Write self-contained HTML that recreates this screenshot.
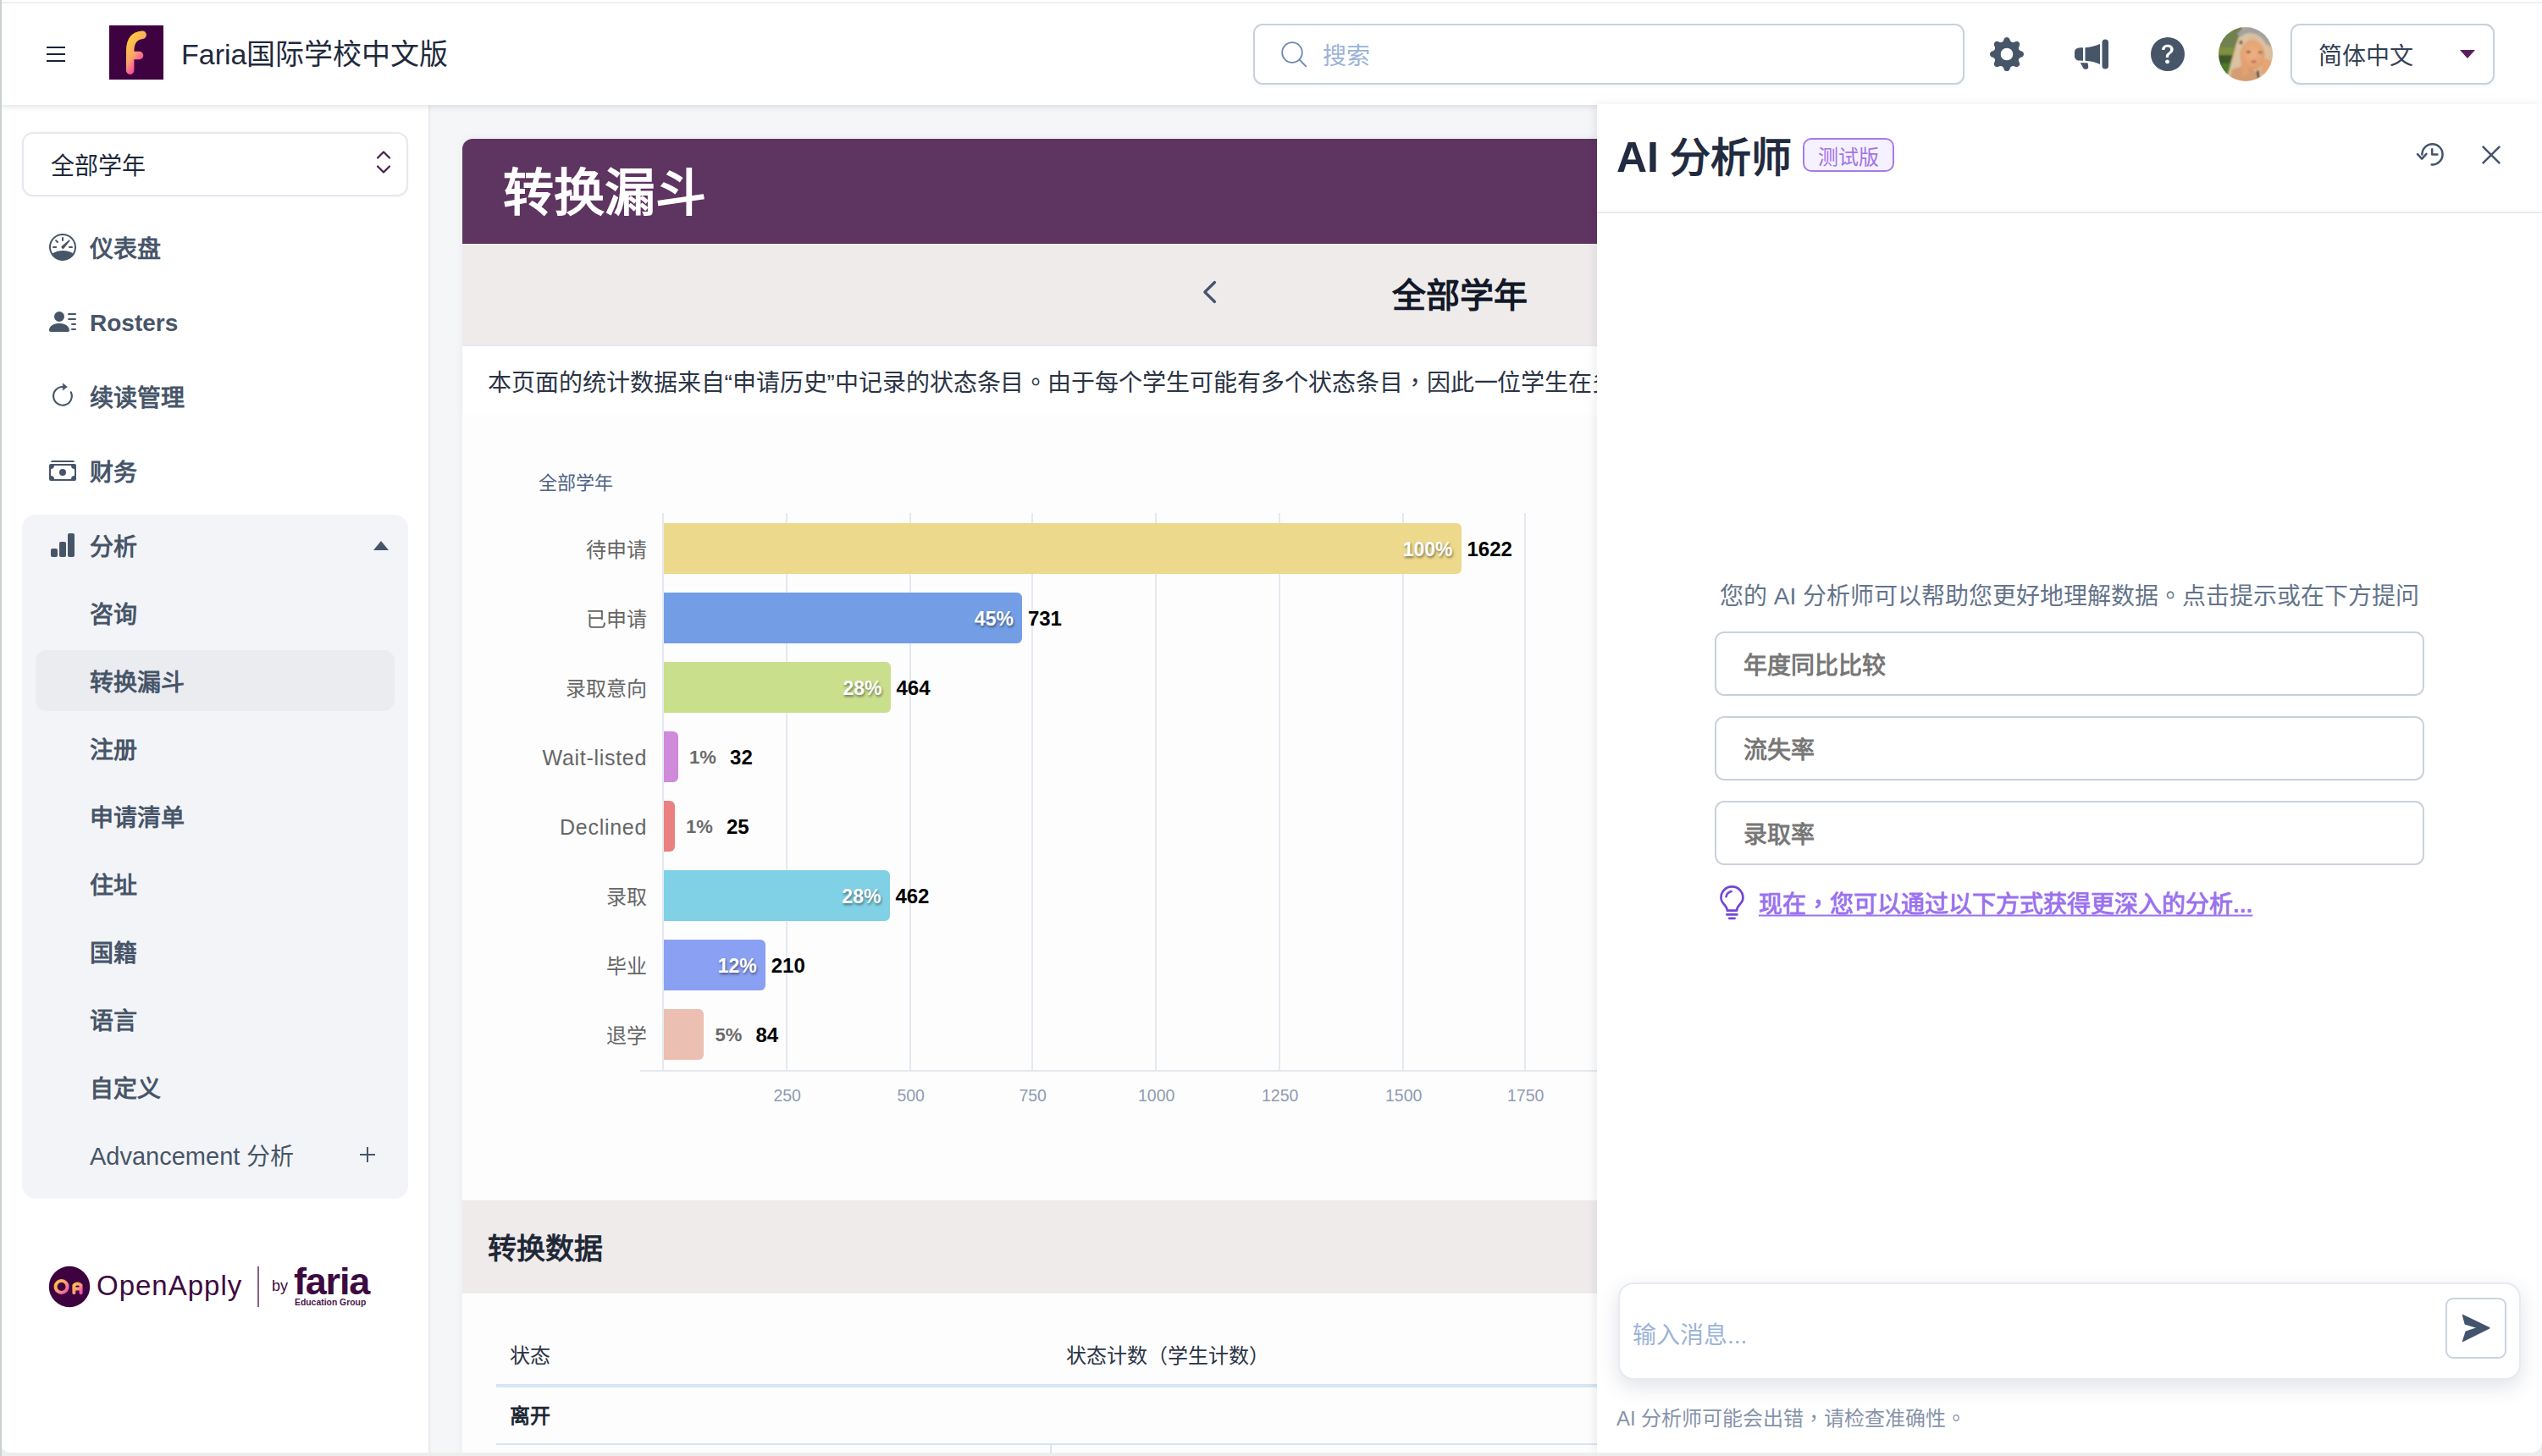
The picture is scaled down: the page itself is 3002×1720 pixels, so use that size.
<!DOCTYPE html>
<html lang="zh-CN">
<head>
<meta charset="utf-8">
<title>转换漏斗</title>
<style>
*{box-sizing:border-box;margin:0;padding:0}
html,body{width:3002px;height:1720px;overflow:hidden;background:#eceeec}
body{font-family:"Liberation Sans",sans-serif;color:#1e293b;position:relative}
.abs{position:absolute}
.t{position:absolute;white-space:nowrap;line-height:1;transform:translateY(-41%)}
.t.l{transform:translateY(-44%)}
#win{position:absolute;left:0;top:0;width:3002px;height:1716px;background:#f5f6f8;overflow:hidden;border-radius:0 0 13px 13px}
#edge{position:absolute;left:0;top:0;width:2px;height:1720px;background:#cbd2ce;z-index:50}
/* header */
#hdr{position:absolute;left:0;top:0;width:3002px;height:124px;background:#fff;box-shadow:0 2px 7px rgba(30,40,50,.13);z-index:5}
#topline{position:absolute;left:0;top:2px;width:3002px;height:2px;background:#f0f0f1}
/* sidebar */
#side{position:absolute;left:0;top:123px;width:506px;height:1600px;background:#fff;box-shadow:1px 0 3px rgba(30,40,70,.10);z-index:3}
.nav{font-size:28px;font-weight:700;color:#475569}
.cl{font-size:24px;color:#666}
.pin{font-size:23px;font-weight:700;color:#fff;text-shadow:1px 2px 3px rgba(0,0,0,.45)}
.pout{font-size:22px;font-weight:700;color:#6b6b6b}
.cnt{font-size:24px;font-weight:700;color:#000}
.t.tick{font-size:19.5px;color:#8f9bb3;transform:translate(-50%,-44%)}
/* card */
#card{position:absolute;left:546px;top:164px;width:1500px;height:1600px;background:#fff;border-radius:12px 0 0 0;overflow:hidden;z-index:1;box-shadow:0 0 10px rgba(30,40,60,.06)}
.pb{position:absolute;left:139px;width:838px;height:76px;border:2px solid #cad1dc;border-radius:11px;background:#fff}
.pbt{left:173px;font-size:28px;font-weight:700;color:#777}
/* AI panel */
#ai{position:absolute;left:1886px;top:123px;width:1116px;height:1593px;background:#fff;box-shadow:-3px 0 10px rgba(30,40,60,.08);z-index:6}
</style>
</head>
<body>
<div id="edge"></div>
<div id="win">

<!-- HEADER -->
<div id="hdr">
  <div id="topline"></div>
  <!-- hamburger -->
  <div class="abs" style="left:55px;top:55px;width:22px;height:2px;background:#1a2238"></div>
  <div class="abs" style="left:55px;top:63px;width:22px;height:2px;background:#1a2238"></div>
  <div class="abs" style="left:55px;top:71px;width:22px;height:2px;background:#1a2238"></div>
  <!-- logo -->
  <svg class="abs" style="left:129px;top:30px" width="64" height="64" viewBox="0 0 64 64">
    <defs><linearGradient id="lg" x1="0.2" y1="0.1" x2="0.6" y2="1"><stop offset="0" stop-color="#fdc443"/><stop offset="0.45" stop-color="#fba66a"/><stop offset="1" stop-color="#fb35ab"/></linearGradient></defs>
    <rect width="64" height="64" fill="#3f0240"/>
    <path d="M39.2 11.2 Q24.7 12.5 24.7 30 L24.7 53.3 M24.7 35.5 L35.6 35.5" fill="none" stroke="url(#lg)" stroke-width="9.4" stroke-linecap="round" stroke-linejoin="round"/>
  </svg>
  <div class="t" style="left:214px;top:64px;font-size:34px;color:#1f2a3d;transform:translateY(-49%)">Faria国际学校中文版</div>
  <!-- search -->
  <div class="abs" style="left:1480px;top:28px;width:840px;height:72px;border:2px solid #c9d1de;border-radius:11px;background:#fff;box-shadow:0 2px 4px rgba(40,60,100,.06)"></div>
  <svg class="abs" style="left:1508px;top:44px" width="40" height="40" viewBox="0 0 40 40"><circle cx="18" cy="18" r="11.8" fill="none" stroke="#6d86ae" stroke-width="1.8"/><path d="M26.4 26.4 L34.3 34.3" stroke="#6d86ae" stroke-width="1.8" stroke-linecap="round"/></svg>
  <div class="t" style="left:1562px;top:64px;font-size:28px;color:#9ab3d6">搜索</div>
  <!-- icons placeholder -->
  <svg class="abs" style="left:2350px;top:44px" width="40" height="40" viewBox="0 0 16 16" fill="#475569"><path d="M9.405 1.05c-.413-1.4-2.397-1.4-2.81 0l-.1.34a1.464 1.464 0 0 1-2.105.872l-.31-.17c-1.283-.698-2.686.705-1.987 1.987l.169.311c.446.82.023 1.841-.872 2.105l-.34.1c-1.4.413-1.4 2.397 0 2.81l.34.1a1.464 1.464 0 0 1 .872 2.105l-.17.31c-.698 1.283.705 2.686 1.987 1.987l.311-.169a1.464 1.464 0 0 1 2.105.872l.1.34c.413 1.4 2.397 1.4 2.81 0l.1-.34a1.464 1.464 0 0 1 2.105-.872l.31.17c1.283.698 2.686-.705 1.987-1.987l-.169-.311a1.464 1.464 0 0 1 .872-2.105l.34-.1c1.4-.413 1.4-2.397 0-2.81l-.34-.1a1.464 1.464 0 0 1-.872-2.105l.17-.31c.698-1.283-.705-2.686-1.987-1.987l-.311.169a1.464 1.464 0 0 1-2.105-.872l-.1-.34zM8 10.93a2.929 2.929 0 1 1 0-5.86 2.929 2.929 0 0 1 0 5.858z"/></svg>
  <svg class="abs" style="left:2450px;top:44px" width="40" height="40" viewBox="0 0 16 16" fill="#475569"><path d="M13 2.5a1.5 1.5 0 0 1 3 0v11a1.5 1.5 0 0 1-3 0v-11zm-1 .724c-2.067.95-4.539 1.481-7 1.656v6.237a25.222 25.222 0 0 1 1.088.085c2.053.204 4.038.668 5.912 1.56V3.224zm-8 7.841V4.934c-.68.027-1.399.043-2.008.053A2.02 2.02 0 0 0 0 7v2c0 1.106.896 1.996 1.994 2.009a68.14 68.14 0 0 1 .496.008 64 64 0 0 1 1.51.048zm1.39 1.081c.285.021.569.047.85.078l.253 1.69a1 1 0 0 1-.983 1.187h-.548a1 1 0 0 1-.916-.599l-1.314-2.48a65.81 65.81 0 0 1 1.692.064c.327.017.65.037.966.06z"/></svg>
  <svg class="abs" style="left:2540px;top:44px" width="40" height="40" viewBox="0 0 16 16" fill="#475569"><path d="M16 8A8 8 0 1 1 0 8a8 8 0 0 1 16 0zM5.496 6.033h.825c.138 0 .248-.113.266-.25.09-.656.54-1.134 1.342-1.134.686 0 1.314.343 1.314 1.168 0 .635-.374.927-.965 1.371-.673.489-1.206 1.06-1.168 1.987l.003.217a.25.25 0 0 0 .25.246h.811a.25.25 0 0 0 .25-.25v-.105c0-.718.273-.927 1.01-1.486.609-.463 1.244-.977 1.244-2.056 0-1.511-1.276-2.241-2.673-2.241-1.267 0-2.655.59-2.75 2.286a.237.237 0 0 0 .241.247zm2.325 6.443c.61 0 1.029-.394 1.029-.927 0-.552-.42-.94-1.029-.94-.584 0-1.009.388-1.009.94 0 .533.425.927 1.01.927z"/></svg>
  <svg class="abs" style="left:2620px;top:32px" width="64" height="64" viewBox="0 0 64 64">
    <defs>
      <clipPath id="avc"><circle cx="32" cy="32" r="32"/></clipPath>
      <filter id="avb" x="-10%" y="-10%" width="120%" height="120%"><feGaussianBlur stdDeviation="1.3"/></filter>
      <radialGradient id="avf" cx="0.5" cy="0.45" r="0.55"><stop offset="0" stop-color="#eeb085"/><stop offset="0.75" stop-color="#e6a473"/><stop offset="1" stop-color="#d99a6c"/></radialGradient>
    </defs>
    <g clip-path="url(#avc)"><g filter="url(#avb)">
      <rect x="-4" y="-4" width="72" height="72" fill="#dcb893"/>
      <path d="M-4 -4 H30 L20 22 L8 68 H-4Z" fill="#6f8050"/>
      <path d="M-4 24 H20 L16 36 H-4Z" fill="#80903f"/>
      <path d="M-4 33 H17 L13 44 H-4Z" fill="#41592a"/>
      <path d="M-4 43 H14 L9 68 H-4Z" fill="#4f7a2c"/>
      <path d="M30 4 Q22 12 20 26 Q16 44 10 58 L22 62 Q26 40 30 26 Q34 12 44 8Z" fill="#d9c3a2"/>
      <path d="M44 6 Q58 12 62 30 Q62 40 58 44 L52 30 Q50 16 40 10Z" fill="#dcc0a0"/>
      <path d="M22 8 Q30 -3 44 0 Q58 5 63 24 L56 20 Q50 8 38 7 Q30 7 26 12Z" fill="#a3a29f"/>
      <ellipse cx="40" cy="33" rx="14.5" ry="17" fill="url(#avf)"/>
      <path d="M16 50 Q30 44 40 50 Q52 58 50 68 H12Z" fill="#d49c72"/>
      <path d="M52 40 Q60 34 63 44 Q62 56 54 60 Q48 52 52 40Z" fill="#e6a574"/>
      <path d="M27 40 Q31 34 34 42 L36 56 L28 58Z" fill="#e3a070"/>
      <ellipse cx="35.4" cy="29.3" rx="2.8" ry="1.5" fill="#8a5a40"/><ellipse cx="49.4" cy="29.9" rx="2.8" ry="1.4" fill="#9a6a50"/>
      <ellipse cx="41.6" cy="40.8" rx="3.2" ry="1.6" fill="#b87058"/>
      <ellipse cx="26.5" cy="18" rx="2" ry="2.6" fill="#8a5030"/>
      <path d="M46.3 51.5 L47.2 60" stroke="#1c1414" stroke-width="2.2"/>
    </g></g>
  </svg>
  <!-- language -->
  <div class="abs" style="left:2705px;top:28px;width:241px;height:72px;border:2px solid #c9d1de;border-radius:11px;background:#fff;box-shadow:0 2px 4px rgba(40,60,100,.06)"></div>
  <div class="t" style="left:2738px;top:63.5px;font-size:28px;color:#334155">简体中文</div>
  <div class="abs" style="left:2905px;top:59px;width:0;height:0;border-left:9px solid transparent;border-right:9px solid transparent;border-top:10px solid #5a1f5e"></div>
</div>

<!-- SIDEBAR -->
<div id="side">
  <!-- coordinates inside #side are target_y - 123 -->
  <div class="abs" style="left:26px;top:33px;width:456px;height:76px;border:2px solid #e6e8ef;border-radius:13px;background:#fff;box-shadow:0 1px 2px rgba(40,50,80,.04)"></div>
  <div class="t" style="left:60px;top:71px;font-size:28px;color:#1e293b">全部学年</div>
  <svg class="abs" style="left:443px;top:53px" width="20" height="32" viewBox="0 0 20 32" fill="none" stroke="#4a1d4f" stroke-width="2.2" stroke-linecap="round" stroke-linejoin="round"><path d="M3 10.5 L10 3.5 L17 10.5"/><path d="M3 20.5 L10 27.5 L17 20.5"/></svg>

  <!-- dashboard -->
  <svg class="abs" style="left:58px;top:153px" width="32" height="32" viewBox="0 0 16 16" fill="#475569"><path fill-rule="evenodd" d="M8 2a.5.5 0 0 1 .5.5V4a.5.5 0 0 1-1 0V2.5A.5.5 0 0 1 8 2zM3.732 3.732a.5.5 0 0 1 .707 0l.915.914a.5.5 0 1 1-.708.708l-.914-.915a.5.5 0 0 1 0-.707zM2 8a.5.5 0 0 1 .5-.5h1.586a.5.5 0 0 1 0 1H2.5A.5.5 0 0 1 2 8zm9.5 0a.5.5 0 0 1 .5-.5h1.5a.5.5 0 0 1 0 1H12a.5.5 0 0 1-.5-.5zm.754-4.246a.389.389 0 0 0-.527-.02L7.547 7.31A.91.91 0 1 0 8.85 8.569l3.434-4.297a.389.389 0 0 0-.029-.518z"/><path fill-rule="evenodd" d="M6.664 15.889A8 8 0 1 1 9.336.11a8 8 0 0 1-2.672 15.78zm-4.665-4.283A11.945 11.945 0 0 1 8 10c2.186 0 4.236.585 6.001 1.606a7 7 0 1 0-12.002 0z"/></svg>
  <div class="t nav" style="left:106px;top:169px">仪表盘</div>
  <!-- rosters -->
  <svg class="abs" style="left:58px;top:241px" width="32" height="32" viewBox="0 0 16 16" fill="#475569"><path d="M6 8a3 3 0 1 0 0-6 3 3 0 0 0 0 6zm-5 6s-1 0-1-1 1-4 6-4 6 3 6 4-1 1-1 1H1zM11 3.5a.5.5 0 0 1 .5-.5h4a.5.5 0 0 1 0 1h-4a.5.5 0 0 1-.5-.5zm.5 2.5a.5.5 0 0 0 0 1h4a.5.5 0 0 0 0-1h-4zm2 3a.5.5 0 0 0 0 1h2a.5.5 0 0 0 0-1h-2zm0 3a.5.5 0 0 0 0 1h2a.5.5 0 0 0 0-1h-2z"/></svg>
  <div class="t l nav" style="left:106px;top:257px">Rosters</div>
  <!-- re-enrol -->
  <svg class="abs" style="left:59px;top:329px" width="30" height="30" viewBox="0 0 30 30" fill="none"><path d="M15.3 5.05 A10.85 10.85 0 1 0 24.78 11.31" stroke="#475569" stroke-width="2.15" stroke-linecap="round"/><path d="M15.26 0.9 L20.4 5.05 L15.26 9.0Z" fill="#475569" stroke="#475569" stroke-width="0.6" stroke-linejoin="round"/></svg>
  <div class="t nav" style="left:106px;top:345px">续读管理</div>
  <!-- finance -->
  <svg class="abs" style="left:58px;top:417px" width="32" height="32" viewBox="0 0 16 16" fill="#475569"><path d="M1 3a1 1 0 0 1 1-1h12a1 1 0 0 1 1 1H1zm7 8a2 2 0 1 0 0-4 2 2 0 0 0 0 4z"/><path d="M0 5a1 1 0 0 1 1-1h14a1 1 0 0 1 1 1v8a1 1 0 0 1-1 1H1a1 1 0 0 1-1-1V5zm3 0a2 2 0 0 1-2 2v4a2 2 0 0 1 2 2h10a2 2 0 0 1 2-2V7a2 2 0 0 1-2-2H3z"/></svg>
  <div class="t nav" style="left:106px;top:433px">财务</div>

  <!-- analysis group -->
  <div class="abs" style="left:26px;top:485px;width:456px;height:808px;background:#f3f4f7;border-radius:16px"></div>
  <svg class="abs" style="left:57.5px;top:504.5px" width="32" height="32" viewBox="0 0 16 16" fill="#475569"><path d="M1 11a1 1 0 0 1 1-1h2a1 1 0 0 1 1 1v3a1 1 0 0 1-1 1H2a1 1 0 0 1-1-1v-3zm5-4a1 1 0 0 1 1-1h2a1 1 0 0 1 1 1v7a1 1 0 0 1-1 1H7a1 1 0 0 1-1-1V7zm5-5a1 1 0 0 1 1-1h2a1 1 0 0 1 1 1v12a1 1 0 0 1-1 1h-2a1 1 0 0 1-1-1V2z"/></svg>
  <div class="t nav" style="left:106px;top:521px">分析</div>
  <div class="abs" style="left:441px;top:516px;width:0;height:0;border-left:9px solid transparent;border-right:9px solid transparent;border-bottom:11px solid #475569"></div>

  <div class="abs" style="left:42px;top:645px;width:424px;height:72px;background:#ebecf0;border-radius:13px"></div>
  <div class="t nav" style="left:106px;top:601px">咨询</div>
  <div class="t nav" style="left:106px;top:681px">转换漏斗</div>
  <div class="t nav" style="left:106px;top:761px">注册</div>
  <div class="t nav" style="left:106px;top:841px">申请清单</div>
  <div class="t nav" style="left:106px;top:921px">住址</div>
  <div class="t nav" style="left:106px;top:1001px">国籍</div>
  <div class="t nav" style="left:106px;top:1081px">语言</div>
  <div class="t nav" style="left:106px;top:1161px">自定义</div>
  <div class="t nav" style="left:106px;top:1241px;font-weight:400"><span style="font-size:29px">Advancement</span> <span style="font-weight:500">分析</span></div>
  <div class="abs" style="left:425px;top:1240px;width:18px;height:2px;background:#475569"></div>
  <div class="abs" style="left:433px;top:1232px;width:2px;height:18px;background:#475569"></div>

  <svg class="abs" style="left:57px;top:1372px" width="50" height="50" viewBox="0 0 50 50">
    <defs><linearGradient id="og" x1="0" y1="0" x2="1" y2="1"><stop offset="0" stop-color="#fdc443"/><stop offset="0.55" stop-color="#f99a7a"/><stop offset="1" stop-color="#f04fae"/></linearGradient></defs>
    <circle cx="25" cy="25" r="24.2" fill="#3f0240"/>
    <g fill="none" stroke="url(#og)" stroke-width="4" stroke-linecap="round" stroke-linejoin="round">
      <circle cx="15.6" cy="25" r="7"/>
      <path d="M30.4 32.2 V23.4 A5.2 5.2 0 0 1 38.6 23.4 V32.2 M30.6 27.4 H38.4" transform="translate(0,0)"/>
    </g>
  </svg>
  <div class="abs" style="left:114px;top:1396.0px;font-size:33px;line-height:0;letter-spacing:1px;color:#3d0a3f;white-space:nowrap">OpenApply</div>
  <div class="abs" style="left:304px;top:1373px;width:2px;height:48px;background:#8c5f85"></div>
  <div class="abs" style="left:321px;top:1395.8px;font-size:18px;line-height:0;color:#3d0a3f;white-space:nowrap">by</div>
  <div class="abs" style="left:347px;top:1391.4px;font-size:45px;letter-spacing:-1.2px;font-weight:700;line-height:0;color:#3d0a3f;white-space:nowrap">faria</div>
  <div class="abs" style="left:348px;top:1416.4px;font-size:10.4px;font-weight:700;line-height:0;color:#4a154b;white-space:nowrap">Education Group</div>
</div>

<!-- MAIN CARD -->
<div id="card">
  <div class="abs" style="left:0;top:0;width:1500px;height:124px;background:#5e3461"></div>
  <div class="t" style="left:48px;top:60px;font-size:60px;font-weight:700;color:#fff">转换漏斗</div>
  <div class="abs" style="left:0;top:124px;width:1500px;height:121px;background:#efebeb;border-bottom:2px solid #e6e8f2"></div>
  <svg class="abs" style="left:870px;top:164px" width="24" height="34" viewBox="0 0 24 34" fill="none" stroke="#44546d" stroke-width="3.2" stroke-linecap="round" stroke-linejoin="round"><path d="M18.5 5.5 L6.8 17 L18.5 28.5"/></svg>
  <div class="t" style="left:1098px;top:180.5px;font-size:40px;font-weight:700;color:#111827">全部学年</div>
  <div class="abs" style="left:0;top:326px;width:1500px;height:928px;background:#fdfdfd"></div>
  <div class="t" style="left:30px;top:286px;font-size:28px;color:#2b3445;letter-spacing:-.05px">本页面的统计数据来自“申请历史”中记录的状态条目<span lang="zh-TW">。</span>由于每个学生可能有多个状态条目<span lang="zh-TW">，</span>因此一位学生在多个状态下可能会被重复计数。</div>
  <div class="t" style="left:90px;top:405px;font-size:22px;color:#4f6484">全部学年</div>
  <div class="abs" style="left:236px;top:442px;width:2px;height:659px;background:#e4e9f0"></div>
  <div class="abs" style="left:382px;top:442px;width:2px;height:659px;background:#e4e9f0"></div>
  <div class="abs" style="left:528px;top:442px;width:2px;height:659px;background:#e4e9f0"></div>
  <div class="abs" style="left:672px;top:442px;width:2px;height:659px;background:#e4e9f0"></div>
  <div class="abs" style="left:818px;top:442px;width:2px;height:659px;background:#e4e9f0"></div>
  <div class="abs" style="left:964px;top:442px;width:2px;height:659px;background:#e4e9f0"></div>
  <div class="abs" style="left:1110px;top:442px;width:2px;height:659px;background:#e4e9f0"></div>
  <div class="abs" style="left:1254px;top:442px;width:2px;height:659px;background:#e4e9f0"></div>
  <div class="abs" style="left:210px;top:1100px;width:1200px;height:2px;background:#e4e9f0"></div>
  <div class="abs" style="left:238px;top:454px;width:942.0px;height:60px;background:#ecd98b;border-radius:0 6px 6px 0"></div>
  <div class="t cl" style="right:1282px;top:484px">待申请</div>
  <div class="t l pin" style="right:330.5px;top:484px">100%</div>
  <div class="t l cnt" style="left:1186.5px;top:484px">1622</div>
  <div class="abs" style="left:238px;top:536px;width:423.4px;height:60px;background:#739ee6;border-radius:0 6px 6px 0"></div>
  <div class="t cl" style="right:1282px;top:566px">已申请</div>
  <div class="t l pin" style="right:849.1px;top:566px">45%</div>
  <div class="t l cnt" style="left:667.9px;top:566px">731</div>
  <div class="abs" style="left:238px;top:618px;width:268.0px;height:60px;background:#c9df8c;border-radius:0 6px 6px 0"></div>
  <div class="t cl" style="right:1282px;top:648px">录取意向</div>
  <div class="t l pin" style="right:1004.5px;top:648px">28%</div>
  <div class="t l cnt" style="left:512.5px;top:648px">464</div>
  <div class="abs" style="left:238px;top:700px;width:16.6px;height:60px;background:#cf8adb;border-radius:0 6px 6px 0"></div>
  <div class="t l cl" style="right:1282px;top:730px;font-size:25px;letter-spacing:.7px">Wait-listed</div>
  <div class="t l pout" style="left:268.1px;top:730px">1%</div>
  <div class="t l cnt" style="left:316.1px;top:730px">32</div>
  <div class="abs" style="left:238px;top:782px;width:12.5px;height:60px;background:#ea8080;border-radius:0 6px 6px 0"></div>
  <div class="t l cl" style="right:1282px;top:812px;font-size:25px;letter-spacing:.7px">Declined</div>
  <div class="t l pout" style="left:264.0px;top:812px">1%</div>
  <div class="t l cnt" style="left:312.0px;top:812px">25</div>
  <div class="abs" style="left:238px;top:864px;width:266.9px;height:60px;background:#80d1e6;border-radius:0 6px 6px 0"></div>
  <div class="t cl" style="right:1282px;top:894px">录取</div>
  <div class="t l pin" style="right:1005.6px;top:894px">28%</div>
  <div class="t l cnt" style="left:511.4px;top:894px">462</div>
  <div class="abs" style="left:238px;top:946px;width:120.2px;height:60px;background:#8aa0f2;border-radius:0 6px 6px 0"></div>
  <div class="t cl" style="right:1282px;top:976px">毕业</div>
  <div class="t l pin" style="right:1152.3px;top:976px">12%</div>
  <div class="t l cnt" style="left:364.7px;top:976px">210</div>
  <div class="abs" style="left:238px;top:1028px;width:46.9px;height:60px;background:#ebbfb2;border-radius:0 6px 6px 0"></div>
  <div class="t cl" style="right:1282px;top:1058px">退学</div>
  <div class="t l pout" style="left:298.4px;top:1058px">5%</div>
  <div class="t l cnt" style="left:346.4px;top:1058px">84</div>
  <div class="t l tick" style="left:383.7px;top:1129.5px">250</div>
  <div class="t l tick" style="left:529.7px;top:1129.5px">500</div>
  <div class="t l tick" style="left:673.7px;top:1129.5px">750</div>
  <div class="t l tick" style="left:819.7px;top:1129.5px">1000</div>
  <div class="t l tick" style="left:965.7px;top:1129.5px">1250</div>
  <div class="t l tick" style="left:1111.7px;top:1129.5px">1500</div>
  <div class="t l tick" style="left:1255.7px;top:1129.5px">1750</div>
  <div class="abs" style="left:0;top:1254px;width:1500px;height:110px;background:#efebeb"></div>
  <div class="t" style="left:30px;top:1308px;font-size:34px;font-weight:700;color:#1f2937">转换数据</div>
  <div class="abs" style="left:0;top:1364px;width:1500px;height:300px;background:#fdfdfd"></div>
  <div class="t" style="left:56px;top:1436px;font-size:24px;color:#2b3445">状态</div>
  <div class="t" style="left:713px;top:1436px;font-size:24px;color:#2b3445">状态计数（学生计数）</div>
  <div class="abs" style="left:40px;top:1470.5px;width:1400px;height:4px;background:#d6e4f6"></div>
  <div class="t" style="left:56px;top:1507px;font-size:24px;font-weight:700;color:#1f2937">离开</div>
  <div class="abs" style="left:40px;top:1541px;width:1400px;height:2px;background:#d6e4f6"></div>
  <div class="abs" style="left:694px;top:1542px;width:2px;height:20px;background:#d6e4f6"></div>
</div>

<!-- AI PANEL -->
<div id="ai">
  <div class="t" style="left:23px;top:58px;font-size:48px;font-weight:700;color:#222b3f"><span style="font-size:50px">AI</span> 分析师</div>
  <div class="abs" style="left:243px;top:40px;width:108px;height:40px;border:2px solid #a57ce8;border-radius:10px;background:#f6f1ff"></div>
  <div class="t" style="left:261px;top:61px;font-size:24px;color:#a074e6">测试版</div>
  <svg class="abs" style="left:966px;top:41px" width="38" height="36" viewBox="0 0 38 36" fill="none" stroke="#44546d" stroke-width="2.5" stroke-linecap="round" stroke-linejoin="round"><path d="M8.4 18.6 A12.1 12.1 0 1 1 19.6 30.4"/><path d="M3 18.2 L8.2 23.6 L13.4 17.8"/><path d="M20.2 12.2 V18.6 H26.4"/></svg>
  <svg class="abs" style="left:1042px;top:46px" width="28" height="28" viewBox="0 0 28 28" fill="none" stroke="#44546d" stroke-width="2.5" stroke-linecap="butt"><path d="M3.8 3.8 L24.2 24.2 M24.2 3.8 L3.8 24.2"/></svg>
  <div class="abs" style="left:0;top:127px;width:1116px;height:2px;background:#e8eaef"></div>

  <div class="t" style="left:558px;top:580px;font-size:28px;color:#64748b;transform:translate(-50%,-44%)">您的 AI 分析师可以帮助您更好地理解数据<span lang="zh-TW">。</span>点击提示或在下方提问</div>
  <div class="pb" style="top:623px"></div><div class="t pbt" style="top:661px">年度同比比较</div>
  <div class="pb" style="top:723px"></div><div class="t pbt" style="top:761px">流失率</div>
  <div class="pb" style="top:823px"></div><div class="t pbt" style="top:861px">录取率</div>
  <svg class="abs" style="left:143px;top:921px" width="34" height="44" viewBox="0 0 34 44" fill="none" stroke="#7247d6" stroke-width="2.7" stroke-linecap="round" stroke-linejoin="round"><path d="M10.8 31.6 H22 C22.4 25 29.4 23.6 29.4 16.4 A13 13 0 0 0 3.4 16.4 C3.4 23.6 10.4 25 10.8 31.6Z"/><path d="M9.5 15.2 Q10.6 10.2 15.6 9"/><path d="M10.4 36.4 H22.4 M13.2 40.8 H19.6"/></svg>
  <div class="t" style="left:191px;top:942.5px;font-size:28px;font-weight:700;color:#9b72ef;text-decoration:underline;text-decoration-thickness:2px;text-underline-offset:3px">现在<span lang="zh-TW">，</span>您可以通过以下方式获得更深入的分析...</div>

  <div class="abs" style="left:25px;top:1392px;width:1066px;height:115px;border:2px solid #e6eaf1;border-radius:18px;background:#fff;box-shadow:0 8px 24px rgba(60,75,110,.16)"></div>
  <div class="t" style="left:42px;top:1452px;font-size:28px;color:#9db3d6">输入消息...</div>
  <div class="abs" style="left:1002px;top:1410px;width:72px;height:72px;border:2px solid #cbd3df;border-radius:9px;background:#fff"></div>
  <svg class="abs" style="left:1014px;top:1422px" width="48" height="48" viewBox="0 0 48 48"><path d="M8.6 8.6 L39.8 23.7 L8.6 39.4 L12.3 28.2 L26.3 23.5 L11.4 19.1Z" fill="#44546d" stroke="#44546d" stroke-width="1.6" stroke-linejoin="round"/></svg>
  <div class="t" style="left:23px;top:1551px;font-size:24px;color:#8793ab">AI 分析师可能会出错<span lang="zh-TW">，</span>请检查准确性<span lang="zh-TW">。</span></div>
</div>

</div>
</body>
</html>
